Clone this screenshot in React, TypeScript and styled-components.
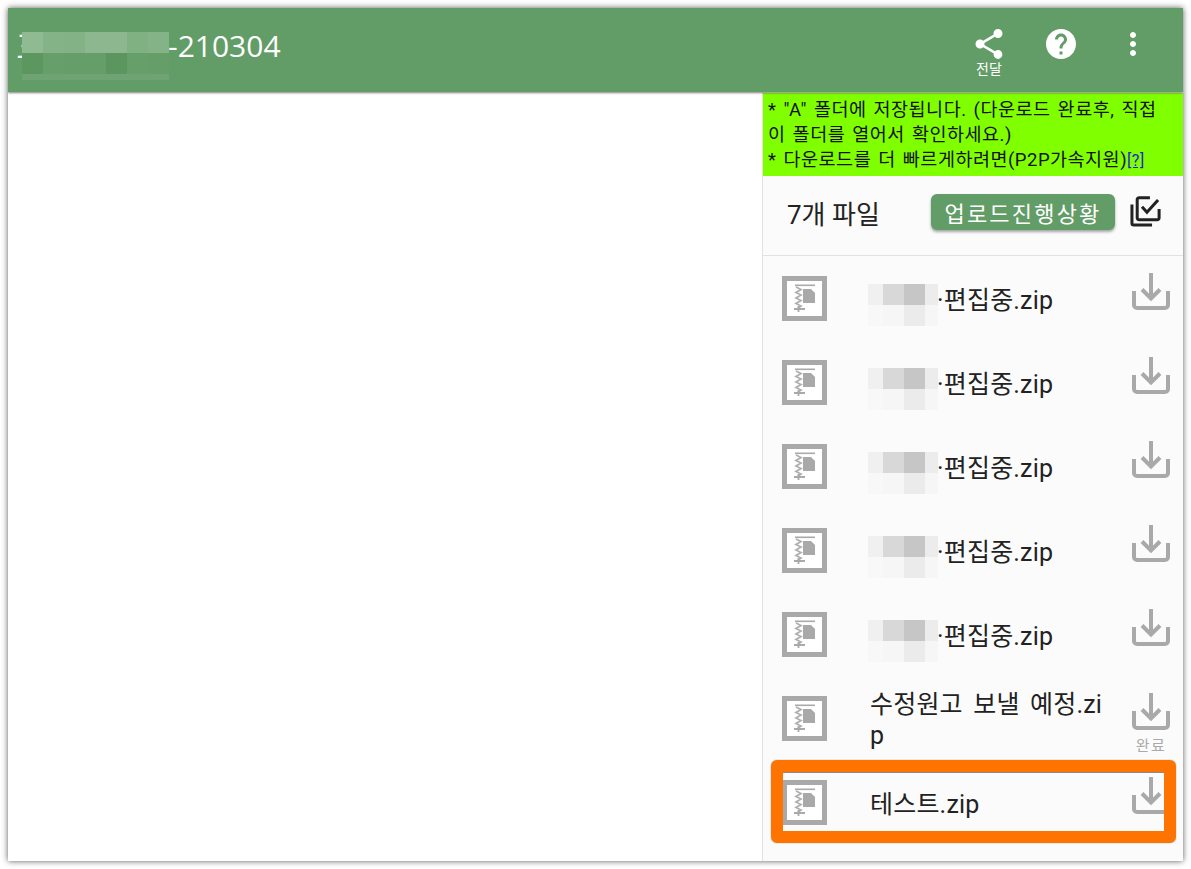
import React from 'react';
import styled, { createGlobalStyle } from 'styled-components';

const GlobalStyle = createGlobalStyle`
  html, body {
    margin: 0;
    background: #fff;
  }
  body {
    padding: 8px;
    font-family: Roboto, "Noto Sans CJK KR", sans-serif;
    color: #222;
  }
`;

const Window = styled.div`
  width: 1175px;
  height: 853px;
  display: flex;
  flex-direction: column;
  background: #fff;
  box-shadow: 0 0 6px rgba(0, 0, 0, 0.65);
  overflow: hidden;
`;

const AppBar = styled.header`
  height: 84px;
  flex: none;
  display: flex;
  align-items: flex-start;
  justify-content: space-between;
  padding-right: 14px;
  background: #629c66;
  box-shadow: 0 1px 2px rgba(0, 0, 0, 0.5);
  position: relative;
  z-index: 2;
`;

const Title = styled.h1`
  margin: 18px 0 0 8px;
  display: flex;
  font-family: "Open Sans", "Noto Sans CJK KR", sans-serif;
  font-size: 30px;
  line-height: 40px;
  font-weight: 400;
  color: #fff;
`;

const HiddenTitle = styled.span`
  position: relative;
  width: 152px;
  overflow: visible;
`;

const Pixelated = styled.div<{ $cols: string; $rows: string }>`
  position: absolute;
  display: grid;
  grid-template-columns: ${(p) => p.$cols};
  grid-template-rows: ${(p) => p.$rows};
`;

const TitleBlur = styled(Pixelated)`
  left: 6px;
  top: 6px;
`;

const Cell = styled.i<{ $c: string; $span?: number }>`
  background: ${(p) => p.$c};
  grid-column: span ${(p) => p.$span ?? 1};
`;

const Actions = styled.div`
  display: flex;
`;

const Action = styled.button`
  width: 72px;
  height: 84px;
  padding: 18px 0 0;
  border: 0;
  background: none;
  color: #fff;
  display: flex;
  flex-direction: column;
  align-items: center;
  font-family: inherit;
  svg {
    display: block;
    flex: none;
  }
  span {
    font-size: 14px;
    line-height: 15px;
  }
`;

const Main = styled.div`
  flex: 1;
  min-height: 0;
  display: flex;
`;

const Blank = styled.div`
  flex: 1;
  background: #fff;
`;

const Sidebar = styled.aside`
  width: 421px;
  flex: none;
  display: flex;
  flex-direction: column;
  background: #fbfbfb;
  border-left: 1px solid #e2e2e2;
  box-sizing: border-box;
  padding-top: 1px;
`;

const Notice = styled.div`
  height: 83px;
  flex: none;
  box-sizing: border-box;
  padding: 5px 18px 0 5px;
  background: #80ff00;
  color: #111;
  font-size: 18.5px;
  line-height: 25px;
  word-spacing: 2px;
  letter-spacing: 0.5px;
  a {
    color: #2222dd;
    text-decoration: underline;
    font-size: 16px;
  }
`;

const ListHead = styled.div`
  height: 80px;
  flex: none;
  box-sizing: border-box;
  display: flex;
  align-items: flex-start;
  padding-left: 24px;
  border-bottom: 1px solid #e2e2e2;
`;

const FileCount = styled.div`
  font-size: 26px;
  line-height: 32px;
  margin-top: 23px;
  width: 144px;
  color: #222;
`;

const UploadButton = styled.button`
  width: 184px;
  height: 36px;
  margin-top: 18px;
  padding: 0;
  border: 0;
  border-radius: 6px;
  background: #629c66;
  color: #fff;
  font-family: inherit;
  font-size: 22px;
  letter-spacing: 2.2px;
  box-shadow: 0 2px 3px rgba(0, 0, 0, 0.35);
`;

const CheckIcon = styled.svg`
  width: 36px;
  height: 36px;
  margin: 18px 0 0 12px;
  fill: none;
  stroke: #222;
  stroke-width: 2;
`;

const FileList = styled.ul`
  list-style: none;
  margin: 0;
  padding: 0;
`;

const Row = styled.li`
  position: relative;
  height: 84px;
  display: flex;
  align-items: flex-start;
  padding-left: 19px;
`;

const ZipFrame = styled.svg`
  flex: none;
  width: 45px;
  height: 45px;
  margin-top: 20px;
`;

const FileName = styled.div`
  position: relative;
  width: 236px;
  margin: 4px 0 0 43px;
  align-self: center;
  flex: none;
  font-size: 25px;
  line-height: 31px;
  letter-spacing: 0.2px;
  word-break: break-all;
  word-spacing: 4px;
  color: #222;
`;

const NameSpacer = styled.span`
  display: inline-block;
  width: 67px;
`;

const NameBlur = styled(Pixelated)`
  left: -2px;
  top: -1px;
`;

const DownloadCol = styled.div`
  flex: none;
  width: 40px;
  margin: 16px 0 0 25px;
  display: flex;
  flex-direction: column;
  align-items: center;
  svg {
    display: block;
  }
  span {
    margin-top: 5px;
    white-space: nowrap;
    font-size: 15px;
    line-height: 18px;
    letter-spacing: 1.5px;
    color: #aaa;
  }
`;

const Highlight = styled.div`
  position: absolute;
  left: 8px;
  top: 0;
  width: 405px;
  height: 83px;
  box-sizing: border-box;
  border: 12px solid #ff7300;
  border-radius: 6px;
  box-shadow: 0 0 1px #555, inset 0 1px 0 #8a8a8a;
`;

const ZipIcon = () => (
  <ZipFrame viewBox="0 0 45 45">
    <rect x="2.5" y="2.5" width="40" height="40" fill="#fff" stroke="#a9a9a9" strokeWidth="5" />
    <path d="M13 8.5h20v1.6H13z" fill="#a9a9a9" />
    <path d="M21 13h8l4 4v10H21z" fill="#a9a9a9" />
    <path d="M14 11l5 2.5-5 3 5 2.5-5 3 5 2.5-5 3 5 2.5-3 2" fill="none" stroke="#b0b0b0" strokeWidth="1.8" />
    <path d="M12 33h11M16.5 30v6" fill="none" stroke="#a9a9a9" strokeWidth="1.8" />
  </ZipFrame>
);

const DownloadIcon = () => (
  <svg width="40" height="40" viewBox="0 0 40 40" fill="none" stroke="#a9a9a9" strokeWidth="4">
    <path d="M20 1v25" />
    <path d="M11 17.5l9 9 9-9" />
    <path d="M3 19v14a3 3 0 0 0 3 3h28a3 3 0 0 0 3-3V19" />
  </svg>
);

const titleCells = [
  '#90bb92', '#84b387', '#84b287', '#8cb78f', '#8cb78f', '#80b183', '#84b387',
  '#5b975f', '#669f6a', '#659e68', '#659e68', '#5a965e', '#669f6a', '#659e68',
];

const nameCells = [
  '#f0f0f0', '#d8d8d8', '#c6c6c6', '#ececec',
  '#f8f8f8', '#f6f6f6', '#ebebeb', '#f6f6f6',
];

const BlurredName = () => (
  <NameBlur $cols="15px 21px 21px 13px" $rows="21px 21px">
    {nameCells.map((c, i) => (
      <Cell key={i} $c={c} />
    ))}
  </NameBlur>
);

const files = [
  { id: 1, blurred: true, name: '·편집중.zip' },
  { id: 2, blurred: true, name: '·편집중.zip' },
  { id: 3, blurred: true, name: '·편집중.zip' },
  { id: 4, blurred: true, name: '·편집중.zip' },
  { id: 5, blurred: true, name: '·편집중.zip' },
  { id: 6, name: '수정원고 보낼 예정.zip', done: true },
  { id: 7, name: '테스트.zip', marked: true },
];

export default function App() {
  return (
    <>
      <GlobalStyle />
      <Window>
        <AppBar>
          <Title>
            <HiddenTitle>
              三
              <TitleBlur $cols="repeat(7, 21px)" $rows="21px 21px 6px">
                {titleCells.map((c, i) => (
                  <Cell key={i} $c={c} />
                ))}
                <Cell $c="#70a373" $span={7} />
              </TitleBlur>
            </HiddenTitle>
            -210304
          </Title>
          <Actions>
            <Action>
              <svg width="36" height="36" viewBox="0 0 24 24" fill="currentColor">
                <path d="M18 16.08c-.76 0-1.44.3-1.96.77L8.91 12.7c.05-.23.09-.46.09-.7s-.04-.47-.09-.7l7.05-4.11c.54.5 1.25.81 2.04.81 1.66 0 3-1.34 3-3s-1.34-3-3-3-3 1.34-3 3c0 .24.04.47.09.7L8.04 9.81C7.5 9.31 6.79 9 6 9c-1.66 0-3 1.34-3 3s1.34 3 3 3c.79 0 1.5-.31 2.04-.81l7.12 4.16c-.05.21-.08.43-.08.65 0 1.61 1.31 2.92 2.92 2.92 1.61 0 2.92-1.31 2.92-2.92s-1.31-2.92-2.92-2.92z" />
              </svg>
              <span>전달</span>
            </Action>
            <Action>
              <svg width="36" height="36" viewBox="0 0 24 24" fill="currentColor">
                <path d="M12 2C6.48 2 2 6.48 2 12s4.48 10 10 10 10-4.48 10-10S17.52 2 12 2zm1 17h-2v-2h2v2zm2.07-7.75l-.9.92C13.45 12.9 13 13.5 13 15h-2v-.5c0-1.1.45-2.1 1.17-2.83l1.24-1.26c.37-.36.59-.86.59-1.41 0-1.1-.9-2-2-2s-2 .9-2 2H8c0-2.21 1.79-4 4-4s4 1.79 4 4c0 .88-.36 1.68-.93 2.25z" />
              </svg>
            </Action>
            <Action>
              <svg width="36" height="36" viewBox="0 0 24 24" fill="currentColor">
                <path d="M12 8c1.1 0 2-.9 2-2s-.9-2-2-2-2 .9-2 2 .9 2 2 2zm0 2c-1.1 0-2 .9-2 2s.9 2 2 2 2-.9 2-2-.9-2-2-2zm0 6c-1.1 0-2 .9-2 2s.9 2 2 2 2-.9 2-2-.9-2-2-2z" />
              </svg>
            </Action>
          </Actions>
        </AppBar>
        <Main>
          <Blank />
          <Sidebar>
            <Notice>
              * "A" 폴더에 저장됩니다. (다운로드 완료후, 직접 이 폴더를 열어서 확인하세요.)
              <br />* 다운로드를 더 빠르게하려면(P2P가속지원)<a href="#help">[?]</a>
            </Notice>
            <ListHead>
              <FileCount>7개 파일</FileCount>
              <UploadButton>업로드진행상황</UploadButton>
              <CheckIcon viewBox="0 0 24 24">
                <path d="M15.3 2.5H8a1.2 1.2 0 0 0-1.2 1.2V16a1.2 1.2 0 0 0 1.2 1.2h12.2a1.2 1.2 0 0 0 1.2-1.2V10" />
                <path d="M3.3 7v12.5a1.2 1.2 0 0 0 1.2 1.2h12.2" />
                <path d="M10 8.5l3.3 3.7L20.7 4" />
              </CheckIcon>
            </ListHead>
            <FileList>
              {files.map((f) => (
                <Row key={f.id}>
                  <ZipIcon />
                  <FileName>
                    {f.blurred && <BlurredName />}
                    {f.blurred && <NameSpacer />}
                    {f.name}
                  </FileName>
                  <DownloadCol>
                    <DownloadIcon />
                    {f.done && <span>완료</span>}
                  </DownloadCol>
                  {f.marked && <Highlight />}
                </Row>
              ))}
            </FileList>
          </Sidebar>
        </Main>
      </Window>
    </>
  );
}
